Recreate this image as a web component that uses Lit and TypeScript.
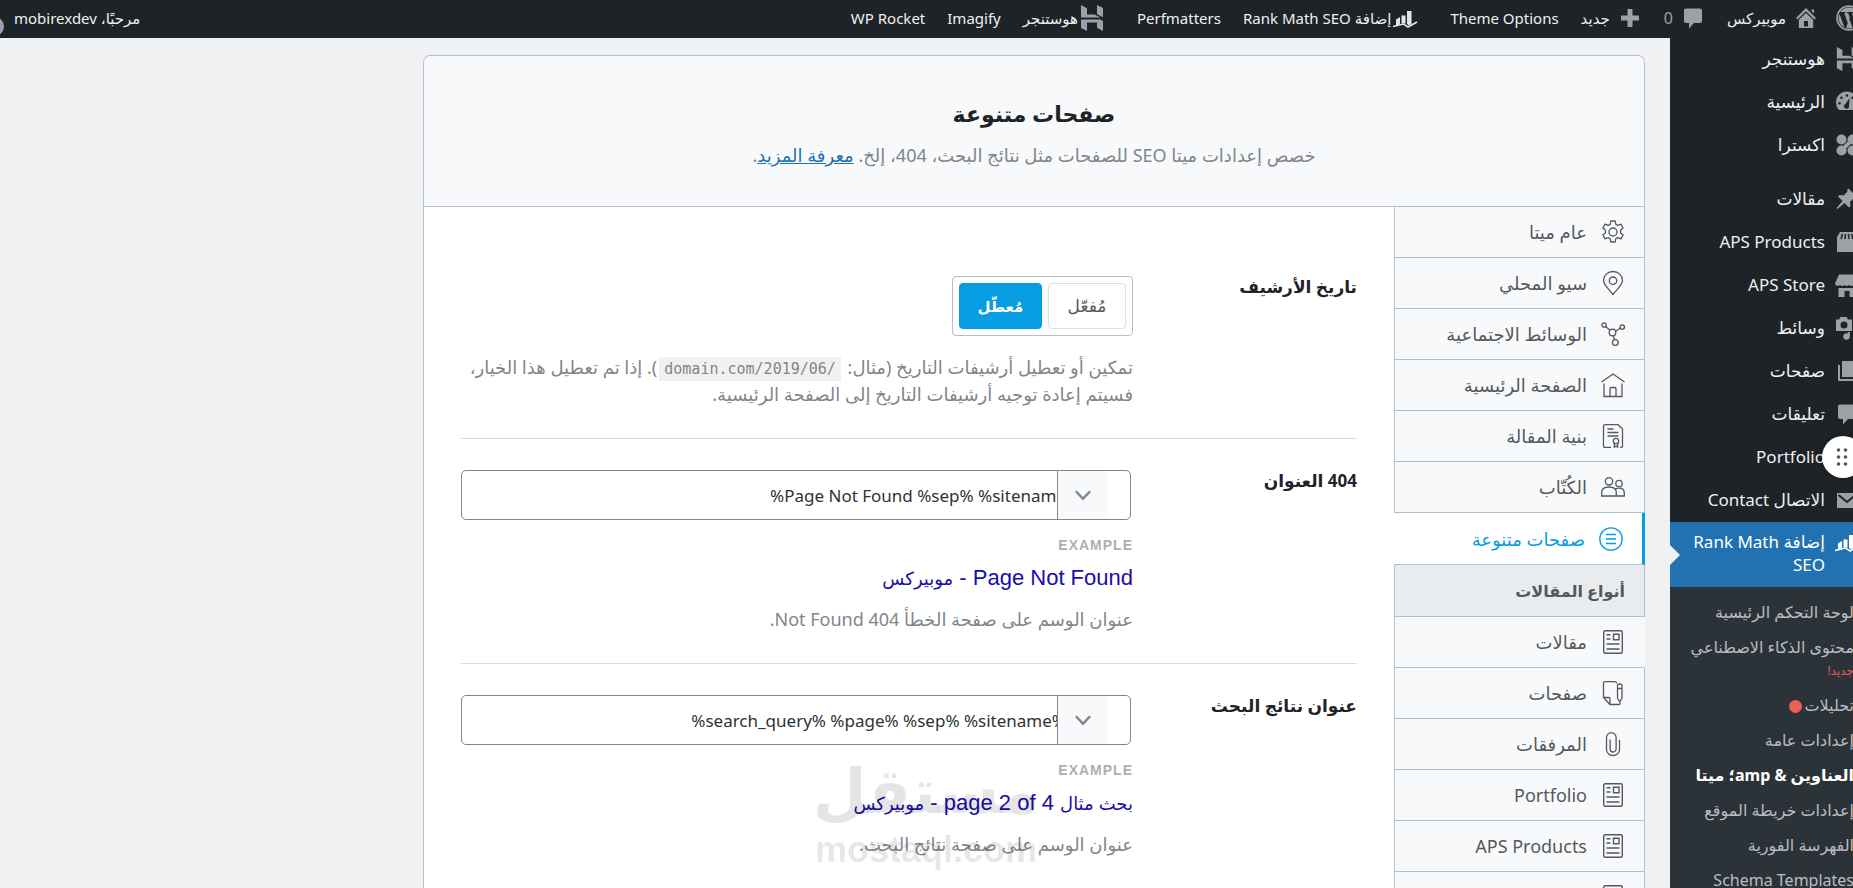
import { LitElement, html, css, svg } from "lit";
import { customElement, property } from "lit/decorators.js";

const ICONS: Record<string, unknown> = {
  wp: svg`<circle cx="12" cy="12" r="11" fill="none" stroke="currentColor" stroke-width="1.6"/><path fill="currentColor" d="M3.2 8.2A9.7 9.7 0 0 0 7.8 20.7zM12 2.3a9.7 9.7 0 0 0-8 4.2h4.7v1l-1 .2 3.300 9.300 1.700-5.200-1.400-4.200-1-.1v-1h5.500v1l-1.200.1 3.300 9.500 1-3.400c.8-2.600-.3-3.900-.9-5.100-.6-1-.6-2.700 1.200-3.100A9.700 9.700 0 0 0 12 2.300zM12.200 12.900l-2.900 8.400a9.700 9.700 0 0 0 6-.2zM20.600 7.500c.2 2-.2 3.400-.8 5.100l-3 8.000A9.700 9.700 0 0 0 20.600 7.500z"/>`,
  home: svg`<path fill="currentColor" d="M12 2 22 12l-1.500 1.400L12 5.300 3.500 13.400 2 12zM17.500 3.500h2.500v4l-2.500-2.400zM4.800 13.800 12 7l7.200 6.800V22H4.800zM10 15v5.500h4V15z" fill-rule="evenodd"/>`,
  comment: svg`<path fill="currentColor" d="M5 2.500h14a2 2 0 0 1 2 2v10.500a2 2 0 0 1-2 2h-6L8 22.500V17H5a2 2 0 0 1-2-2V4.500a2 2 0 0 1 2-2z"/>`,
  plus: svg`<path fill="currentColor" d="M9.500 3h5v6.500H21v5h-6.500V21h-5v-6.500H3v-5h6.500z"/>`,
  rank: svg`<path fill="currentColor" d="M3 13.500 7 11v7l-4 2zM8.500 9.500h4V18l-2-1-2 1zM14 5h4.500v13L16 19.500 14 18z"/><path fill="none" stroke="currentColor" stroke-width="1.600" d="M0 20.500 10.500 18l4.500 3 9-5"/>`,
  host: svg`<path fill="currentColor" d="M1 0l6 3.200v6.300h7.500l6 3H1zM17 0l6 3v9.300l-6-3zM1 14.500h19.500L23 16v10l-6-3.200v-5.300H7V26l-6-3z"/>`,
  dash: svg`<path fill="currentColor" fill-rule="evenodd" d="M4 20a11 11 0 1 1 16 0zM12 4.200a1.300 1.300 0 1 0 0 2.600 1.300 1.300 0 0 0 0-2.600zM6.500 6.500a1.300 1.300 0 1 0 0 2.600 1.300 1.300 0 0 0 0-2.600zM17.500 6.500a1.300 1.300 0 1 0 0 2.600 1.300 1.300 0 0 0 0-2.600zM4.500 12a1.300 1.300 0 1 0 0 2.600 1.300 1.300 0 0 0 0-2.600zM19.500 12a1.300 1.300 0 1 0 0 2.600 1.300 1.300 0 0 0 0-2.600zM14.500 8l-4 6a2.500 2.500 0 1 0 3.500 2z"/>`,
  extra: svg`<g fill="currentColor"><circle cx="6.500" cy="6.500" r="5"/><circle cx="17.500" cy="6.500" r="5"/><circle cx="6.500" cy="17.500" r="5"/><circle cx="17.500" cy="17.500" r="5"/></g><path stroke="currentColor" stroke-width="4" d="M7 17 17 7"/>`,
  pin: svg`<path fill="currentColor" d="M13.500 1.500 22 10l-1.500 1.500-1.500-.5-4 4 .5 4-1.500 1.500-4.500-4.500L2.500 22l-1-1L7.500 14 3 9.500 4.500 8l4 .5 4-4-.5-1.500z"/>`,
  products: svg`<path fill="currentColor" d="M5 2h14l3 5v15H2V7z"/><path fill="none" stroke="#1d2327" stroke-width="1.500" d="M7.500 4 6 9M10.500 4 10 9M13.500 4l.5 5M16.500 4 18 9"/>`,
  store: svg`<path fill="currentColor" d="M4 1.500h16l4 9a3 3 0 0 1-5.500 1.500 3.200 3.200 0 0 1-4.500 0 3.200 3.200 0 0 1-4.500 0A3.200 3.200 0 0 1 5 12 3 3 0 0 1 0 10.500zM3.500 15h17v9h-6v-6h-5v6h-6z"/>`,
  media: svg`<path fill="currentColor" fill-rule="evenodd" d="M1 3.500h3l1.500-2.500h6L13 3.500h4v11.500H1zM9 5.500a3.500 3.500 0 1 0 0 7 3.500 3.500 0 0 0 0-7z"/><path fill="currentColor" d="M18.500 8.500h5.500v11a3 3 0 1 1-2-3v-4h-3.500z"/><circle cx="11.500" cy="20.500" r="3.200" fill="currentColor"/><path stroke="currentColor" stroke-width="2" d="M13.800 20.500V16"/>`,
  pages: svg`<path fill="currentColor" d="M7 2h15v16H7zM3 6h2v14h14v2H3z"/>`,
  mail: svg`<path fill="currentColor" d="M2 5h20v15H2z"/><path fill="none" stroke="#1d2327" stroke-width="2" d="M3.500 7 12 14l8.500-7"/>`,
  gear: svg`<g fill="none" stroke="currentColor" stroke-width="1.300" stroke-linejoin="round"><circle cx="12" cy="12" r="4"/><path d="M9.800 1h4.400l.6 3.300 2 1.100 3.100-1.200 2.200 3.800-2.500 2.100v2.800l2.500 2.100-2.200 3.800-3.100-1.200-2 1.100-.6 3.300H9.800l-.6-3.300-2-1.100-3.100 1.200L1.900 15l2.500-2.100v-2.800L1.900 8l2.200-3.800 3.100 1.200 2-1.100z"/></g>`,
  marker: svg`<g fill="none" stroke="currentColor" stroke-width="1.300"><path d="M12 23.500C8 18 2.500 14 2.500 9.500a9.500 9 0 0 1 19 0C21.500 14 16 18 12 23.500z"/><circle cx="12" cy="9.700" r="3.700"/></g>`,
  social: svg`<g fill="none" stroke="currentColor" stroke-width="1.300"><circle cx="11.500" cy="10.500" r="3.300"/><circle cx="3" cy="3" r="2.200"/><circle cx="21.300" cy="5" r="2.200"/><circle cx="14.300" cy="20.500" r="2.900"/><path d="M4.700 4.500 9 8.300M14.600 9.200 19.300 6M12.300 13.700l1.300 4"/></g>`,
  house: svg`<g fill="none" stroke="currentColor" stroke-width="1.300"><path d="M.5 9 12 1l11.500 8M3 10.500v13h18v-13M9 23V16q0-1.500 1.500-1.500h3q1.500 0 1.500 1.500v7"/></g>`,
  article: svg`<g fill="none" stroke="currentColor" stroke-width="1.300"><path d="M10 23.300H4q-1.500 0-1.500-1.500V2Q2.500.7 4 .7h13L21.500 5v17.300q0 1-1.500 1h-1M6.500 5h6M6.500 8.500h11M6.500 12h11"/><circle cx="15" cy="17" r="2.700"/><path d="M13.300 19v4.300L15 22l1.700 1.300V19"/></g>`,
  authors: svg`<g fill="none" stroke="currentColor" stroke-width="1.300"><circle cx="8" cy="6.300" r="3.700"/><circle cx="18" cy="8.500" r="3.200"/><path d="M.7 21v-3.500Q.7 12 8 12t7.300 5.500V21zM14 14.500q1.500-1.300 4-1.300 5.300 0 5.300 4.500V21h-8"/></g>`,
  misc: svg`<g fill="none" stroke="currentColor" stroke-width="1.300"><circle cx="12" cy="12" r="11.200"/><path d="M7 7.500h10M7 12h10M7 16.500h10"/></g>`,
  post: svg`<g fill="none" stroke="currentColor" stroke-width="1.400"><rect x="2.700" y=".8" width="18.600" height="22.500" rx="1.500"/><path d="M5.500 4.700h4M5.500 9h4M12.500 4.300h5.500v5.500h-5.500zM5.500 14h13M5.500 19h13"/></g>`,
  sheet: svg`<g fill="none" stroke="currentColor" stroke-width="1.300"><path d="M15.500 2.500V2q0-1.300-1.500-1.300H4Q2.500.7 2.500 2v14.500l6.500 7h9q1.500 0 1.500-1.500M9 23v-5q0-1.500-1.500-1.500h-5"/><path d="M16.500 4.500q0-1.500 2.300-1.500T21 4.500V17l-2.200 4-2.300-4zM16.500 7.500H21"/></g>`,
  clip: svg`<path fill="none" stroke="currentColor" stroke-width="1.300" d="M18.500 8v9.500a6.500 6 0 0 1-13 0V5.500a4.800 4.800 0 0 1 9.600 0V17a3 3 0 0 1-6 0V7.500"/>`,
  chevron: svg`<path fill="none" stroke="currentColor" stroke-width="3" d="M3.500 7.500 12 16.500 20.500 7.500"/>`,
};

@customElement("ui-icon")
class UiIcon extends LitElement {
  @property() name = "";
  static styles = css`
    :host { display: block; flex: none; width: 24px; height: 24px; }
    svg { display: block; width: 100%; height: 100%; overflow: visible; }
  `;
  render() {
    return html`<svg viewBox=${this.name === "host" ? "0 0 24 26" : "0 0 24 24"} aria-hidden="true">${ICONS[this.name]}</svg>`;
  }
}

const MENU = [
  ["host", "هوستنجر"], ["dash", "الرئيسية"], ["extra", "اكسترا"], null,
  ["pin", "مقالات"], ["products", "APS Products"], ["store", "APS Store"], ["media", "وسائط"],
  ["pages", "صفحات"], ["comment", "تعليقات"], ["", "Portfolio"], ["mail", "الاتصال Contact"],
];

const TABS = [
  ["gear", "عام ميتا"], ["marker", "سيو المحلي"], ["social", "الوسائط الاجتماعية"],
  ["house", "الصفحة الرئيسية"], ["article", "بنية المقالة"], ["authors", "الكُتّاب"],
  ["misc", "صفحات متنوعة", "active"], ["", "أنواع المقالات", "heading"],
  ["post", "مقالات", "open"], ["sheet", "صفحات"], ["clip", "المرفقات"],
  ["post", "Portfolio"], ["post", "APS Products"], ["post", ""],
];

@customElement("app-root")
class AppRoot extends LitElement {
  static styles = css`
    :host {
      display: flex; flex-direction: column; height: 100vh; overflow: hidden; position: relative;
      direction: rtl; background: #f0f1f3; color: #1f2328;
      font: 17px/24px "Noto Sans", "DejaVu Sans", sans-serif;
    }
    * { box-sizing: border-box; }
    a { color: inherit; text-decoration: none; }
    ul, h1, p { margin: 0; padding: 0; list-style: none; }
    button, input { font: inherit; margin: 0; }

    .bar { flex: none; height: 38px; padding-bottom: 2px; background: #1d2327; color: #f0f0f1; display: flex; align-items: center; white-space: nowrap; margin: 0 -9px 0 -26px; font-size: 15px; }
    .bar a { display: flex; align-items: center; padding: 0 11px; gap: 8px; }
    .bar ui-icon { color: #9ca1a8; width: 24px; height: 24px; }
    .bar .wp { padding: 0 0 0 7px; }
    .bar .wp ui-icon { width: 26px; height: 26px; }
    .bar .count { color: #9ca1a8; font-size: 16px; }
    .bar .tight { gap: 2px; padding-right: 22px; }
    .bar .tight ui-icon { width: 24px; height: 26px; }
    .bar .rank ui-icon { color: #e3e5e8; }
    .bar .user { margin-right: auto; gap: 10px; }
    .avatar { width: 19px; height: 19px; border-radius: 50%; background: #9ca1a8; margin-top: 16px; }

    .shell { flex: 1; display: flex; align-items: stretch; margin-right: -15px; min-height: 0; }
    .side { flex: none; width: 198px; background: #1d2327; color: #f0f0f1; }
    .side .item { display: flex; align-items: center; height: 43px; padding: 0 9px 2px 0; gap: 10px; }
    .side .item ui-icon { color: #9ca1a8; }
    .side .blank { width: 24px; }
    .side .gap { height: 11px; }
    .side .current { position: relative; display: flex; align-items: flex-start; gap: 10px; height: 65px; padding: 8px 9px 0 20px; background: #2271b1; color: #fff; line-height: 23px; }
    .side .current::after { content: ""; position: absolute; left: 0; top: 23px; border: 10px solid transparent; border-left-color: #f0f1f3; border-right-width: 0; }
    .sub { background: #2c3338; color: #b9bdc3; padding: 8px 14px 0 0; height: 320px; font-size: 16px; white-space: nowrap; }
    .sub li { height: 35px; line-height: 35px; }
    .sub .new { height: 23px; margin-top: -6px; margin-bottom: 6px; line-height: 23px; font-size: 12px; color: #f0595a; }
    .sub .strong { font-weight: 700; color: #fff; }
    .dot { display: inline-block; width: 13px; height: 13px; border-radius: 50%; background: #eb5f5b; margin-right: 2px; vertical-align: -2px; }

    .main { flex: 1; min-width: 0; padding: 17px 25px 0 16px; }
    .card { max-width: 1222px; background: #fff; border-top: 1px solid #b5bfc9; border-radius: 7px 7px 0 0; }
    .head { border: 1px solid #b5bfc9; border-top: 0; border-radius: 7px 7px 0 0; background: #f8f9fb; text-align: center; padding: 35px 16px 37px; }
    .head h1 { font-size: 22px; line-height: 44px; font-weight: 700; }
    .head p { font-size: 18px; line-height: 27px; margin-top: 7px; color: #7f868d; }
    .head p a { color: #2271b1; text-decoration: underline; }
    .cols { display: flex; }

    .tabs { flex: none; width: 251px; font-size: 18px; color: #54595f; }
    .tabs a, .tabs h2 { display: flex; align-items: center; gap: 14px; height: 51px; margin: 0; padding: 0 19px 0 10px; background: #f8f9fb; border: 1px solid #b5bfc9; border-top: 0; }
    .tabs .active { height: 52px; background: #fff; color: #069de3; border-left-color: #fff; border-right: 3px solid #069de3; }
    .tabs h2 { height: 52px; font-size: 16px; font-weight: 700; background: #e9ecef; }
    .tabs .open { border-right-color: #f8f9fb; }

    .content { flex: 1; min-width: 0; border-left: 1px solid #b5bfc9; padding: 38px 37px 0; }
    .row { display: grid; grid-template-columns: 1fr 3fr; padding: 31px 0 30px; border-bottom: 1px solid #d5dce3; }
    .label { font-weight: 700; font-size: 17px; line-height: 22px; }
    .desc { color: #7f868d; font-size: 18px; line-height: 27px; }
    .group { display: inline-flex; gap: 6px; padding: 6px; border: 1px solid #b5bfc9; border-radius: 4px; background: #fff; vertical-align: top; }
    .group button { min-width: 78px; height: 46px; padding: 0 8px; border: 1px solid #dcdfe3; border-radius: 4px; background: #fff; color: #54595f; font-size: 17px; }
    .group .on { min-width: 83px; background: #069de3; border-color: #069de3; color: #fff; font-weight: 700; font-size: 15px; }
    .group + .desc { margin-top: 18px; }
    code { direction: ltr; unicode-bidi: isolate; font: 15px/20px "DejaVu Sans Mono", monospace; background: #f1f1f1; padding: 3px 5px; margin: 0 2px; }
    .field { position: relative; margin-right: 2px; }
    .field input { display: block; width: 100%; height: 50px; border: 1px solid #7e8690; border-radius: 5px; background: #fff; color: #2c3338; padding: 0 64px 0 10px; direction: rtl; outline: 0; }
    .field button { position: absolute; top: 1px; bottom: 1px; right: 23px; width: 51px; border: 0; border-left: 1px solid #7e8690; background: #f8f9fb; color: #7f868d; padding: 0; display: grid; place-items: center; }
    .field ui-icon { width: 20px; height: 20px; }
    .ex { font: 700 14px/20px "Liberation Sans", sans-serif; letter-spacing: 1px; color: #b0afa8; margin-top: 15px; }
    .serp { display: block; font: 22px/32px "Liberation Sans", "DejaVu Sans", sans-serif; color: #1a0dab; margin-top: 7px; }
    .serp .ar { font-size: 18px; }
    .serp + .desc { margin-top: 11px; }

    .grip { position: absolute; right: -11px; top: 436px; width: 42px; height: 42px; border: 0; border-radius: 50%; background: #fff; padding: 0; box-shadow: 0 0 6px rgba(0,0,0,.3); color: #50555b; }
    .grip svg { position: absolute; left: 13px; top: 11px; width: 14px; height: 20px; }
    .mark { position: absolute; left: 800px; top: 752px; width: 252px; text-align: center; color: rgba(0,0,0,.1); font: 700 36px/36px "Liberation Sans", sans-serif; pointer-events: none; direction: ltr; }
    .mark span { display: block; font: 700 62px/80px "DejaVu Sans", sans-serif; direction: rtl; }
  `;

  row(id: string, label: string, value: string, title: unknown, desc: string) {
    return html`<div class="row">
      <label class="label" for=${id}>${label}</label>
      <div>
        <div class="field">
          <input id=${id} type="text" .value=${value} />
          <button type="button" aria-label="متغيرات"><ui-icon name="chevron"></ui-icon></button>
        </div>
        <p class="ex">EXAMPLE</p>
        <a class="serp" href="#">${title}</a>
        <p class="desc">${desc}</p>
      </div>
    </div>`;
  }

  render() {
    return html`
      <nav class="bar">
        <a class="wp" href="#" aria-label="WordPress"><ui-icon name="wp"></ui-icon></a>
        <a href="#"><ui-icon name="home"></ui-icon>موبيركس</a>
        <a href="#"><ui-icon name="comment"></ui-icon><span class="count">0</span></a>
        <a href="#"><ui-icon name="plus"></ui-icon>جديد</a>
        <a href="#">Theme Options</a>
        <a class="tight rank" href="#"><ui-icon name="rank"></ui-icon>إضافة Rank Math SEO</a>
        <a href="#">Perfmatters</a>
        <a class="tight" href="#"><ui-icon name="host"></ui-icon>هوستنجر</a>
        <a href="#">Imagify</a>
        <a href="#">WP Rocket</a>
        <a class="user" href="#">مرحبًا، mobirexdev<span class="avatar"></span></a>
      </nav>
      <div class="shell">
        <nav class="side">
          <ul>
            ${MENU.map((m) => m
              ? html`<li><a class="item" href="#">${m[0] ? html`<ui-icon name=${m[0]}></ui-icon>` : html`<span class="blank"></span>`}${m[1]}</a></li>`
              : html`<li class="gap"></li>`)}
          </ul>
          <a class="current" href="#"><ui-icon name="rank"></ui-icon><span>إضافة Rank Math SEO</span></a>
          <ul class="sub">
            <li><a href="#">لوحة التحكم الرئيسية</a></li>
            <li><a href="#">محتوى الذكاء الاصطناعي</a></li>
            <li class="new">جديد!</li>
            <li><a href="#">تحليلات<span class="dot"></span></a></li>
            <li><a href="#">إعدادات عامة</a></li>
            <li class="strong"><a href="#">العناوين & amp؛ ميتا</a></li>
            <li><a href="#">إعدادات خريطة الموقع</a></li>
            <li><a href="#">الفهرسة الفورية</a></li>
            <li><a href="#">Schema Templates</a></li>
          </ul>
        </nav>
        <main class="main">
          <section class="card">
            <header class="head">
              <h1>صفحات متنوعة</h1>
              <p>خصص إعدادات ميتا SEO للصفحات مثل نتائج البحث، 404، إلخ. <a href="#">معرفة المزيد</a>.</p>
            </header>
            <div class="cols">
              <nav class="tabs">
                ${TABS.map(([icon, text, kind]) => kind === "heading"
                  ? html`<h2>${text}</h2>`
                  : html`<a class=${kind ?? ""} href="#"><ui-icon name=${icon}></ui-icon>${text}</a>`)}
              </nav>
              <div class="content">
                <div class="row">
                  <div class="label" id="arch">تاريخ الأرشيف</div>
                  <div>
                    <div class="group" role="group" aria-labelledby="arch">
                      <button type="button">مُفعّل</button><button type="button" class="on">مُعطّل</button>
                    </div>
                    <p class="desc">تمكين أو تعطيل أرشيفات التاريخ (مثال: <code>domain.com/2019/06/</code>). إذا تم تعطيل هذا الخيار، فسيتم إعادة توجيه أرشيفات التاريخ إلى الصفحة الرئيسية.</p>
                  </div>
                </div>
                ${this.row("t404", "404 العنوان", "Page Not Found %sep% %sitename%", html`Page Not Found - <span class="ar">موبيركس</span>`, "عنوان الوسم على صفحة الخطأ 404 Not Found.")}
                ${this.row("tsearch", "عنوان نتائج البحث", "%search_query% %page% %sep% %sitename%", html`<span class="ar">بحث مثال</span> page 2 of 4 - <span class="ar">موبيركس</span>`, "عنوان الوسم على صفحة نتائج البحث.")}
              </div>
            </div>
          </section>
        </main>
      </div>
      <button class="grip" type="button" aria-label="سحب"><svg viewBox="0 0 14 20" fill="currentColor"><circle cx="3.500" cy="3" r="1.800"/><circle cx="10.500" cy="3" r="1.800"/><circle cx="3.500" cy="10" r="1.800"/><circle cx="10.500" cy="10" r="1.800"/><circle cx="3.500" cy="17" r="1.800"/><circle cx="10.500" cy="17" r="1.800"/></svg></button>
      <div class="mark" aria-hidden="true"><span>مستقل</span>mostaql.com</div>
    `;
  }
}
